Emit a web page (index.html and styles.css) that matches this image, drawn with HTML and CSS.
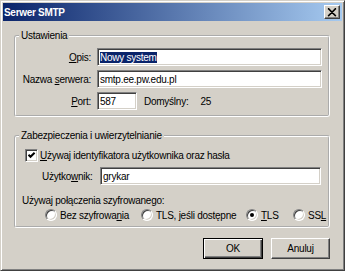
FILE: index.html
```html
<!DOCTYPE html>
<html lang="pl">
<head>
  <meta charset="UTF-8" />
  <title>Serwer SMTP</title>
  <link rel="stylesheet" href="styles.css">
</head>
<body>
  <div class="window">
    <div class="titlebar">
      <span class="title">Serwer SMTP</span>
      <span class="close-btn">
        <svg width="10" height="9" viewBox="0 0 10 9"><path d="M1 0.5 L8.5 8 M1.5 0.5 L9 8 M8.5 0.5 L1 8 M9 0.5 L1.5 8" stroke="#000" stroke-width="1.1" fill="none"/></svg>
      </span>
    </div>

    <div class="content">
      <fieldset class="group group-settings">
        <legend>Ustawienia</legend>
        <div class="settings-grid">
          <label class="lbl"><u>O</u>pis:</label>
          <div class="field field-wide"><span class="selected">Nowy system</span></div>

          <label class="lbl">Nazwa <u>s</u>erwera:</label>
          <div class="field field-wide">smtp.ee.pw.edu.pl</div>

          <label class="lbl"><u>P</u>ort:</label>
          <div class="port-row">
            <div class="field field-port">587</div>
            <span class="default-lbl">Domyślny:</span>
            <span>25</span>
          </div>
        </div>
      </fieldset>

      <fieldset class="group group-security">
        <legend>Zabezpieczenia i uwierzytelnianie</legend>
        <div class="security-body">
          <div class="check-row">
            <span class="checkbox">
              <svg width="9" height="9" viewBox="0 0 9 9"><path d="M1.5 3.8 L3.5 5.8 L7.6 1.7" stroke="#000" stroke-width="2" fill="none"/></svg>
            </span>
            <span><u>U</u>żywaj identyfikatora użytkownika oraz hasła</span>
          </div>

          <div class="user-row">
            <label class="user-lbl">Użytko<u>w</u>nik:</label>
            <div class="field field-user">grykar</div>
          </div>

          <div class="enc-label">Używaj połączenia szyfrowanego:</div>

          <div class="radio-row">
            <span class="opt opt-none"><span class="radio"></span><span>Bez szyfrowa<u>n</u>ia</span></span>
            <span class="opt opt-avail"><span class="radio"></span><span>TLS, jeśli dostępne</span></span>
            <span class="opt opt-tls"><span class="radio checked"></span><span><u>T</u>LS</span></span>
            <span class="opt"><span class="radio"></span><span>SS<u>L</u></span></span>
          </div>
        </div>
      </fieldset>

      <div class="buttons">
        <span class="btn btn-default">OK</span>
        <span class="btn btn-cancel">Anuluj</span>
      </div>
    </div>
  </div>
</body>
</html>
```
FILE: styles.css
```css
* { box-sizing: border-box; }
body {
  margin: 0;
  font-family: 'Liberation Sans', Arial, sans-serif;
  font-size: 10px;
  letter-spacing: -0.25px;
  color: #000;
  background: #fff;
}
u { text-underline-offset: 1px; }

.window {
  width: 345px; height: 271px;
  background: #d4d0c8;
  border: 1px solid;
  border-color: #d4d0c8 #404040 #404040 #d4d0c8;
  box-shadow: inset 1px 1px 0 #fff, inset -1px -1px 0 #808080;
  padding: 2px;
}
.titlebar {
  height: 18px;
  display: flex;
  align-items: center;
  justify-content: space-between;
  padding: 0 2px 0 1px;
  background: linear-gradient(to right, #0a246a, #a6caf0);
  color: #fff;
  font-weight: bold;
  letter-spacing: -0.3px;
}
.close-btn {
  width: 16px; height: 14px;
  display: flex;
  align-items: center;
  justify-content: center;
  background: #d4d0c8;
  border: 1px solid;
  border-color: #fff #404040 #404040 #fff;
  box-shadow: inset -1px -1px 0 #808080;
}

.content { padding: 0 12px 0 11px; }

.group {
  margin: 8px 0 0;
  padding: 0;
  min-width: 0;
  border: 2px groove #fff;
  border-radius: 3px;
}
.group legend {
  padding: 0 2px;
  margin-left: 3px;
  line-height: 13px;
}
.group-security { margin-top: 12px; }

.settings-grid {
  display: grid;
  grid-template-columns: 69px auto;
  column-gap: 6px;
  row-gap: 4px;
  padding: 6px 0 5px 6px;
}
.lbl { text-align: right; align-self: center; white-space: nowrap; }

.field {
  height: 18px;
  display: flex;
  align-items: center;
  padding-left: 2px;
  background: #fff;
  border: 1px solid;
  border-color: #808080 #fff #fff #808080;
  box-shadow: inset 1px 1px 0 #404040, inset -1px -1px 0 #d4d0c8;
  white-space: nowrap;
}
.field-wide { width: 225px; }
.field-port { width: 40px; }
.field-user { width: 221px; }
.selected {
  background: #0a246a;
  color: #fff;
  line-height: 11px;
}

.port-row { display: flex; align-items: center; }
.default-lbl { margin: 0 12px 0 7px; }

.security-body { padding: 6px 0 4px 6px; }
.check-row {
  height: 15px;
  display: flex;
  align-items: center;
  gap: 2px;
  margin-left: 3px;
  white-space: nowrap;
}
.checkbox {
  width: 13px; height: 13px;
  display: flex;
  align-items: center;
  justify-content: center;
  background: #fff;
  border: 1px solid;
  border-color: #808080 #fff #fff #808080;
  box-shadow: inset 1px 1px 0 #404040, inset -1px -1px 0 #d4d0c8;
}
.user-row {
  display: flex;
  align-items: center;
  margin: 4px 0 0 20px;
}
.user-lbl { width: 58px; white-space: nowrap; }
.enc-label { margin-top: 9px; line-height: 13px; }

.radio-row {
  display: flex;
  align-items: center;
  height: 14px;
  margin: 1px 0 0 23px;
  white-space: nowrap;
}
.opt { display: flex; align-items: center; gap: 3px; flex: none; }
.opt-none { width: 96px; }
.opt-avail { width: 105px; }
.opt-tls { width: 47px; }
.radio {
  width: 12px; height: 12px;
  flex: none;
  display: flex;
  align-items: center;
  justify-content: center;
  border-radius: 50%;
  background: #fff;
  border: 1px solid;
  border-color: #808080 #fff #fff #808080;
  box-shadow: inset 1px 1px 0 #404040, inset -1px -1px 0 #d4d0c8;
}
.radio.checked::after {
  content: "";
  width: 4px; height: 4px;
  border-radius: 50%;
  background: #000;
}

.buttons {
  display: flex;
  justify-content: flex-end;
  gap: 8px;
  margin-top: 10px;
}
.btn {
  width: 59px; height: 21px;
  display: flex;
  align-items: center;
  justify-content: center;
  border: 1px solid;
  border-color: #fff #404040 #404040 #fff;
  box-shadow: inset -1px -1px 0 #808080;
}
.btn-default {
  width: 60px;
  border-color: #000;
  box-shadow: inset 1px 1px 0 #fff, inset -1px -1px 0 #404040, inset -2px -2px 0 #808080;
}
```
